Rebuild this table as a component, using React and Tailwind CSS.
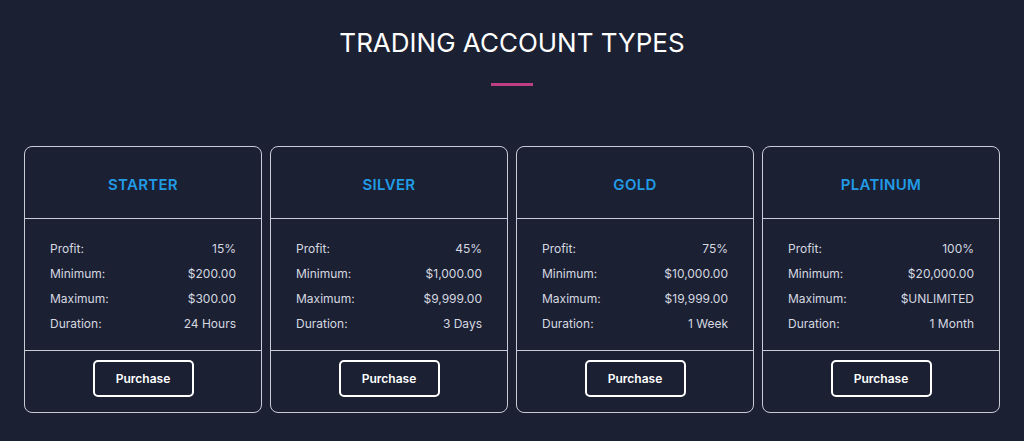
import React from "react";

const plans = [
  { name: "STARTER", rows: [["Profit:", "15%"], ["Minimum:", "$200.00"], ["Maximum:", "$300.00"], ["Duration:", "24 Hours"]] },
  { name: "SILVER", rows: [["Profit:", "45%"], ["Minimum:", "$1,000.00"], ["Maximum:", "$9,999.00"], ["Duration:", "3 Days"]] },
  { name: "GOLD", rows: [["Profit:", "75%"], ["Minimum:", "$10,000.00"], ["Maximum:", "$19,999.00"], ["Duration:", "1 Week"]] },
  { name: "PLATINUM", rows: [["Profit:", "100%"], ["Minimum:", "$20,000.00"], ["Maximum:", "$UNLIMITED"], ["Duration:", "1 Month"]] },
];

export default function App() {
  return (
    <div
      className="w-[1024px] h-[441px] bg-[#1b2033] flex flex-col items-center overflow-hidden"
      style={{ fontFamily: "Inter, 'Noto Sans', sans-serif" }}
    >
      <h1 className="mt-[27px] text-[26px] leading-[32px] text-white font-normal">
        TRADING ACCOUNT TYPES
      </h1>
      <div className="mt-[24px] w-[42px] h-[3px] bg-[#c03f84]" />
      <div className="mt-[60px] flex gap-[8px]">
        {plans.map((p) => (
          <div key={p.name} className="w-[238px] h-[267px] border border-[#c9ccd6] rounded-[8px] flex flex-col">
            <div className="h-[72px] flex items-center justify-center border-b border-[#c9ccd6]">
              <span className="text-[15px] font-semibold text-[#219be6] tracking-[0.3px] mt-[6px]">{p.name}</span>
            </div>
            <div className="h-[132px] border-b border-[#c9ccd6] px-[25px] pt-[21px] flex flex-col gap-[7px]">
              {p.rows.map(([k, v]) => (
                <div key={k} className="flex justify-between text-[12px] leading-[18px] text-[#d6d8e0]">
                  <span>{k}</span>
                  <span>{v}</span>
                </div>
              ))}
            </div>
            <div className="flex-1 flex justify-center pt-[9px]">
              <button className="w-[101px] h-[37px] border-2 border-white rounded-[5px] text-white text-[12px] font-semibold">
                Purchase
              </button>
            </div>
          </div>
        ))}
      </div>
    </div>
  );
}
